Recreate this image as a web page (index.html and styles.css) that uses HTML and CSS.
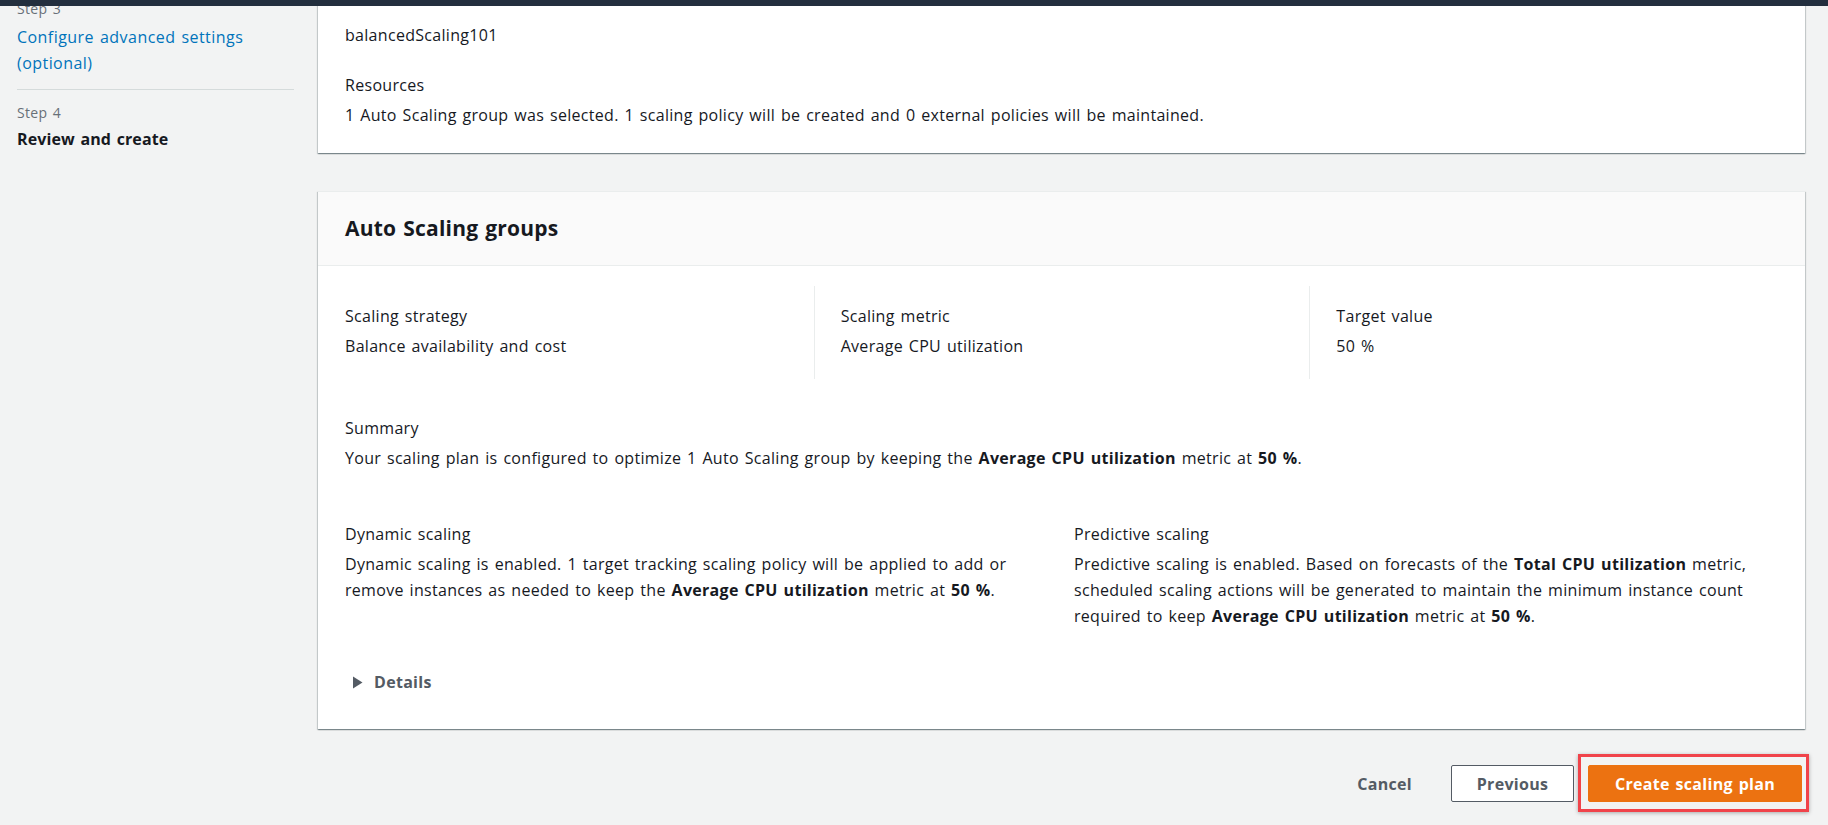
FILE: index.html
```html
<!DOCTYPE html>
<html lang="en">
<head>
<meta charset="utf-8">
<title>Create scaling plan - Review and create</title>
<link rel="stylesheet" href="styles.css">
</head>
<body>
<header class="topbar"></header>
<div class="layout">
  <nav class="steps">
    <div class="step">
      <div class="step-label">Step 3</div>
      <a class="step-link" href="#">Configure advanced settings (optional)</a>
    </div>
    <div class="step step-current">
      <div class="step-label">Step 4</div>
      <div class="step-title">Review and create</div>
    </div>
  </nav>
  <main class="content">
    <section class="card card-plan">
      <div class="kv kv-first">
        <div class="kv-label">Scaling plan name</div>
        <div class="kv-value">balancedScaling101</div>
      </div>
      <div class="kv">
        <div class="kv-label">Resources</div>
        <div class="kv-value">1 Auto Scaling group was selected. 1 scaling policy will be created and 0 external policies will be maintained.</div>
      </div>
    </section>

    <section class="card card-groups">
      <div class="card-header">
        <h2 class="card-title">Auto Scaling groups</h2>
      </div>
      <div class="columns">
        <div class="col">
          <div class="kv-label">Scaling strategy</div>
          <div class="kv-value">Balance availability and cost</div>
        </div>
        <div class="col">
          <div class="kv-label">Scaling metric</div>
          <div class="kv-value">Average CPU utilization</div>
        </div>
        <div class="col">
          <div class="kv-label">Target value</div>
          <div class="kv-value">50 %</div>
        </div>
      </div>
      <div class="card-body">
        <div class="kv summary">
          <div class="kv-label">Summary</div>
          <div class="kv-value">Your scaling plan is configured to optimize 1 Auto Scaling group by keeping the <b>Average CPU utilization</b> metric at <b>50 %</b>.</div>
        </div>
        <div class="pair">
          <div class="kv">
            <div class="kv-label">Dynamic scaling</div>
            <div class="kv-value">Dynamic scaling is enabled. 1 target tracking scaling policy will be applied to add or remove instances as needed to keep the <b>Average CPU utilization</b> metric at <b>50 %</b>.</div>
          </div>
          <div class="kv">
            <div class="kv-label">Predictive scaling</div>
            <div class="kv-value">Predictive scaling is enabled. Based on forecasts of the <b>Total CPU utilization</b> metric, scheduled scaling actions will be generated to maintain the minimum instance count required to keep <b>Average CPU utilization</b> metric at <b>50 %</b>.</div>
          </div>
        </div>
        <div class="expander">
          <svg class="caret" width="11" height="13" viewBox="0 0 11 13"><path d="M1 0.5 L10.5 6.5 L1 12.5 Z" fill="#545b64"/></svg>
          <span>Details</span>
        </div>
      </div>
    </section>

    <div class="actions">
      <button class="btn btn-link">Cancel</button>
      <button class="btn btn-normal">Previous</button>
      <button class="btn btn-primary">Create scaling plan</button>
    </div>
  </main>
</div>
</body>
</html>
```

FILE: styles.css
```css
* { box-sizing: border-box; }
html, body { margin: 0; padding: 0; }
body {
  background: #f2f3f3;
  font-family: "Open Sans", "Liberation Sans", Arial, sans-serif;
  font-size: 16px;
  line-height: 26px;
  letter-spacing: 0.3px;
  word-spacing: 1.4px;
  color: #16191f;
  width: 1828px;
  height: 825px;
  overflow: hidden;
}
b { font-weight: 700; }
.topbar {
  position: fixed;
  top: 0; left: 0; right: 0;
  height: 6px;
  background: #232f3e;
  z-index: 10;
}
.layout {
  display: flex;
  margin-top: -40px;
}
.steps {
  width: 294px;
  flex: none;
  padding: 38px 0 0 17px;
}
.step-label {
  font-size: 14px;
  line-height: 22px;
  color: #687078;
}
.step-link {
  display: block;
  color: #0073bb;
  text-decoration: none;
  font-size: 16px;
  line-height: 26px;
  padding-top: 4px;
  width: 250px;
  letter-spacing: 0.45px;
}
.step {
  padding-bottom: 13px;
}
.step-current {
  border-top: 1px solid #d5dbdb;
  padding-top: 12px;
}
.step-title {
  font-weight: 700;
  padding-top: 2px;
  letter-spacing: 0.1px;
}
.content {
  flex: none;
  width: 1487px;
  margin-left: 24px;
}
.card {
  background: #fff;
  box-shadow: 0 1px 1px 0 rgba(0,28,36,0.3), 1px 1px 1px 0 rgba(0,28,36,0.15), -1px 1px 1px 0 rgba(0,28,36,0.15);
}
.card-plan {
  padding: 32px 27px 25px;
  display: flex;
  flex-direction: column;
  gap: 24px;
}
.kv-label {
  margin-bottom: 4px;
}
.kv-first .kv-label {
  margin-top: -10px;
  margin-bottom: 14px;
}
.card-groups {
  margin-top: 38px;
  border-top: 1px solid #eaeded;
}
.card-header {
  background: #fafafa;
  border-bottom: 1px solid #eaeded;
  padding: 23px 27px 24px;
}
.card-title {
  margin: 0;
  font-size: 21px;
  line-height: 26px;
  font-weight: 700;
  letter-spacing: 0.2px;
}
.columns {
  display: grid;
  grid-template-columns: repeat(3, 1fr);
  margin-top: 20px;
}
.col {
  padding: 17px 20px 20px 27px;
}
.col + .col {
  border-left: 1px solid #eaeded;
  padding-left: 26px;
}
.card-body {
  padding: 36px 27px 34px;
}
.pair {
  display: grid;
  grid-template-columns: 1fr 1fr;
  column-gap: 25px;
  margin-top: 50px;
}
.expander {
  display: flex;
  align-items: center;
  gap: 11px;
  margin-top: 40px;
  padding-left: 7px;
  color: #545b64;
  font-weight: 700;
}
.caret { flex: none; }
.actions {
  display: flex;
  justify-content: flex-end;
  align-items: center;
  margin-top: 36px;
  padding-right: 3px;
}
.btn {
  font-family: inherit;
  font-size: 16px;
  font-weight: 700;
  letter-spacing: 0.3px;
  word-spacing: 1.4px;
  height: 37px;
  border-radius: 2px;
  cursor: pointer;
}
.btn-link {
  background: none;
  border: none;
  color: #545b64;
  padding: 0 20px;
  margin-right: 19px;
}
.btn-normal {
  background: #fff;
  border: 1px solid #545b64;
  color: #545b64;
  width: 123px;
}
.btn-primary {
  position: relative;
  background: #ec7211;
  border: 1px solid #ec7211;
  color: #fff;
  width: 214px;
  margin-left: 14px;
}
.btn-primary::after {
  content: "";
  position: absolute;
  top: -12px; left: -11px; right: -8px; bottom: -11px;
  border: 3px solid #f0434a;
  box-shadow: 0 1px 4px rgba(0,0,0,0.3);
  pointer-events: none;
}
```
